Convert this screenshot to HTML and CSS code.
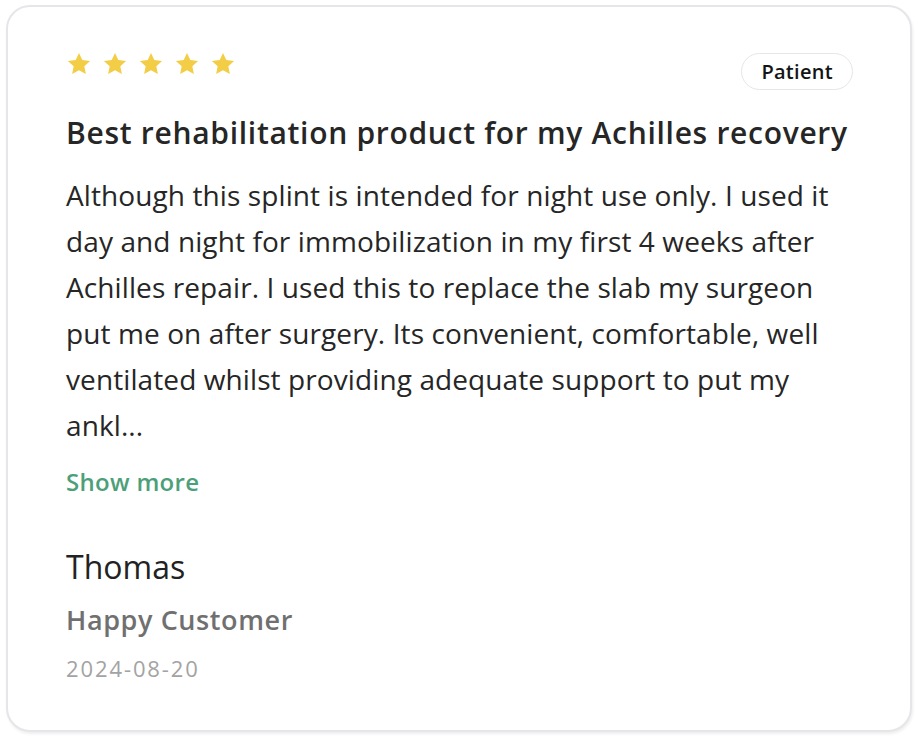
FILE: index.html
```html
<!DOCTYPE html>
<html lang="en">
<head>
<meta charset="utf-8">
<title>Review</title>
<link rel="stylesheet" href="styles.css">
</head>
<body>
<article class="card">
  <header class="top">
    <div class="stars" aria-label="5 out of 5 stars">
      <svg class="star" viewBox="0 0 24 24"><path d="M12 1.8l3.05 6.6 7.2.85-5.33 4.93 1.42 7.12L12 17.7l-6.34 3.6 1.42-7.12L1.75 9.25l7.2-.85z"/></svg>
      <svg class="star" viewBox="0 0 24 24"><path d="M12 1.8l3.05 6.6 7.2.85-5.33 4.93 1.42 7.12L12 17.7l-6.34 3.6 1.42-7.12L1.75 9.25l7.2-.85z"/></svg>
      <svg class="star" viewBox="0 0 24 24"><path d="M12 1.8l3.05 6.6 7.2.85-5.33 4.93 1.42 7.12L12 17.7l-6.34 3.6 1.42-7.12L1.75 9.25l7.2-.85z"/></svg>
      <svg class="star" viewBox="0 0 24 24"><path d="M12 1.8l3.05 6.6 7.2.85-5.33 4.93 1.42 7.12L12 17.7l-6.34 3.6 1.42-7.12L1.75 9.25l7.2-.85z"/></svg>
      <svg class="star" viewBox="0 0 24 24"><path d="M12 1.8l3.05 6.6 7.2.85-5.33 4.93 1.42 7.12L12 17.7l-6.34 3.6 1.42-7.12L1.75 9.25l7.2-.85z"/></svg>
    </div>
    <span class="badge">Patient</span>
  </header>
  <h2 class="title">Best rehabilitation product for my Achilles recovery</h2>
  <p class="body">Although this splint is intended for night use only. I used it day and night for immobilization in my first 4 weeks after Achilles repair. I used this to replace the slab my surgeon put me on after surgery. Its convenient, comfortable, well ventilated whilst providing adequate support to put my ankl...</p>
  <a class="more" href="#">Show more</a>
  <div class="author">Thomas</div>
  <div class="role">Happy Customer</div>
  <div class="date">2024-08-20</div>
</article>
</body>
</html>
```

FILE: styles.css
```css
* { box-sizing: border-box; }
html, body { margin: 0; background: #ffffff; }
body {
  padding: 5px 6px 6px 6px;
  font-family: "Open Sans", Lato, sans-serif;
}
.card {
  height: 727px;
  border: 2px solid #e6e6ea;
  border-radius: 24px;
  box-shadow: 1px 2px 3px rgba(0, 0, 0, 0.07);
  background: #fff;
  padding: 44px 57px 0 58px;
  display: flex;
  flex-direction: column;
}
.top {
  display: flex;
  justify-content: space-between;
  align-items: flex-start;
}
.stars {
  display: flex;
  gap: 10px;
}
.star {
  width: 26px;
  height: 26px;
  fill: #f4cd46;
}
.badge {
  margin-top: 2px;
  height: 37px;
  padding: 0 19px;
  border: 1px solid #e6e6e6;
  border-radius: 19px;
  display: flex;
  align-items: center;
  font-size: 20px;
  font-weight: 600;
  letter-spacing: 0.3px;
  color: #141414;
}
.title {
  margin: 22.8px 0 0 0;
  font-size: 30px;
  line-height: 40px;
  font-weight: 600;
  letter-spacing: 0.7px;
  color: #262626;
}
.body {
  margin: 19.6px 0 0 0;
  font-size: 28px;
  line-height: 46px;
  font-weight: 400;
  letter-spacing: 0.1px;
  color: #262626;
}
.more {
  margin-top: 18px;
  font-size: 24px;
  line-height: 32px;
  font-weight: 600;
  letter-spacing: 0.3px;
  color: #4d9f79;
  text-decoration: none;
  align-self: flex-start;
}
.author {
  margin-top: 49px;
  font-size: 32px;
  line-height: 40px;
  color: #222;
}
.role {
  margin-top: 15.5px;
  font-size: 27px;
  line-height: 34px;
  font-weight: 600;
  letter-spacing: 0.6px;
  color: #707070;
}
.date {
  margin-top: 17.6px;
  font-size: 22px;
  line-height: 28px;
  letter-spacing: 1.9px;
  color: #a3a3a3;
}
```
